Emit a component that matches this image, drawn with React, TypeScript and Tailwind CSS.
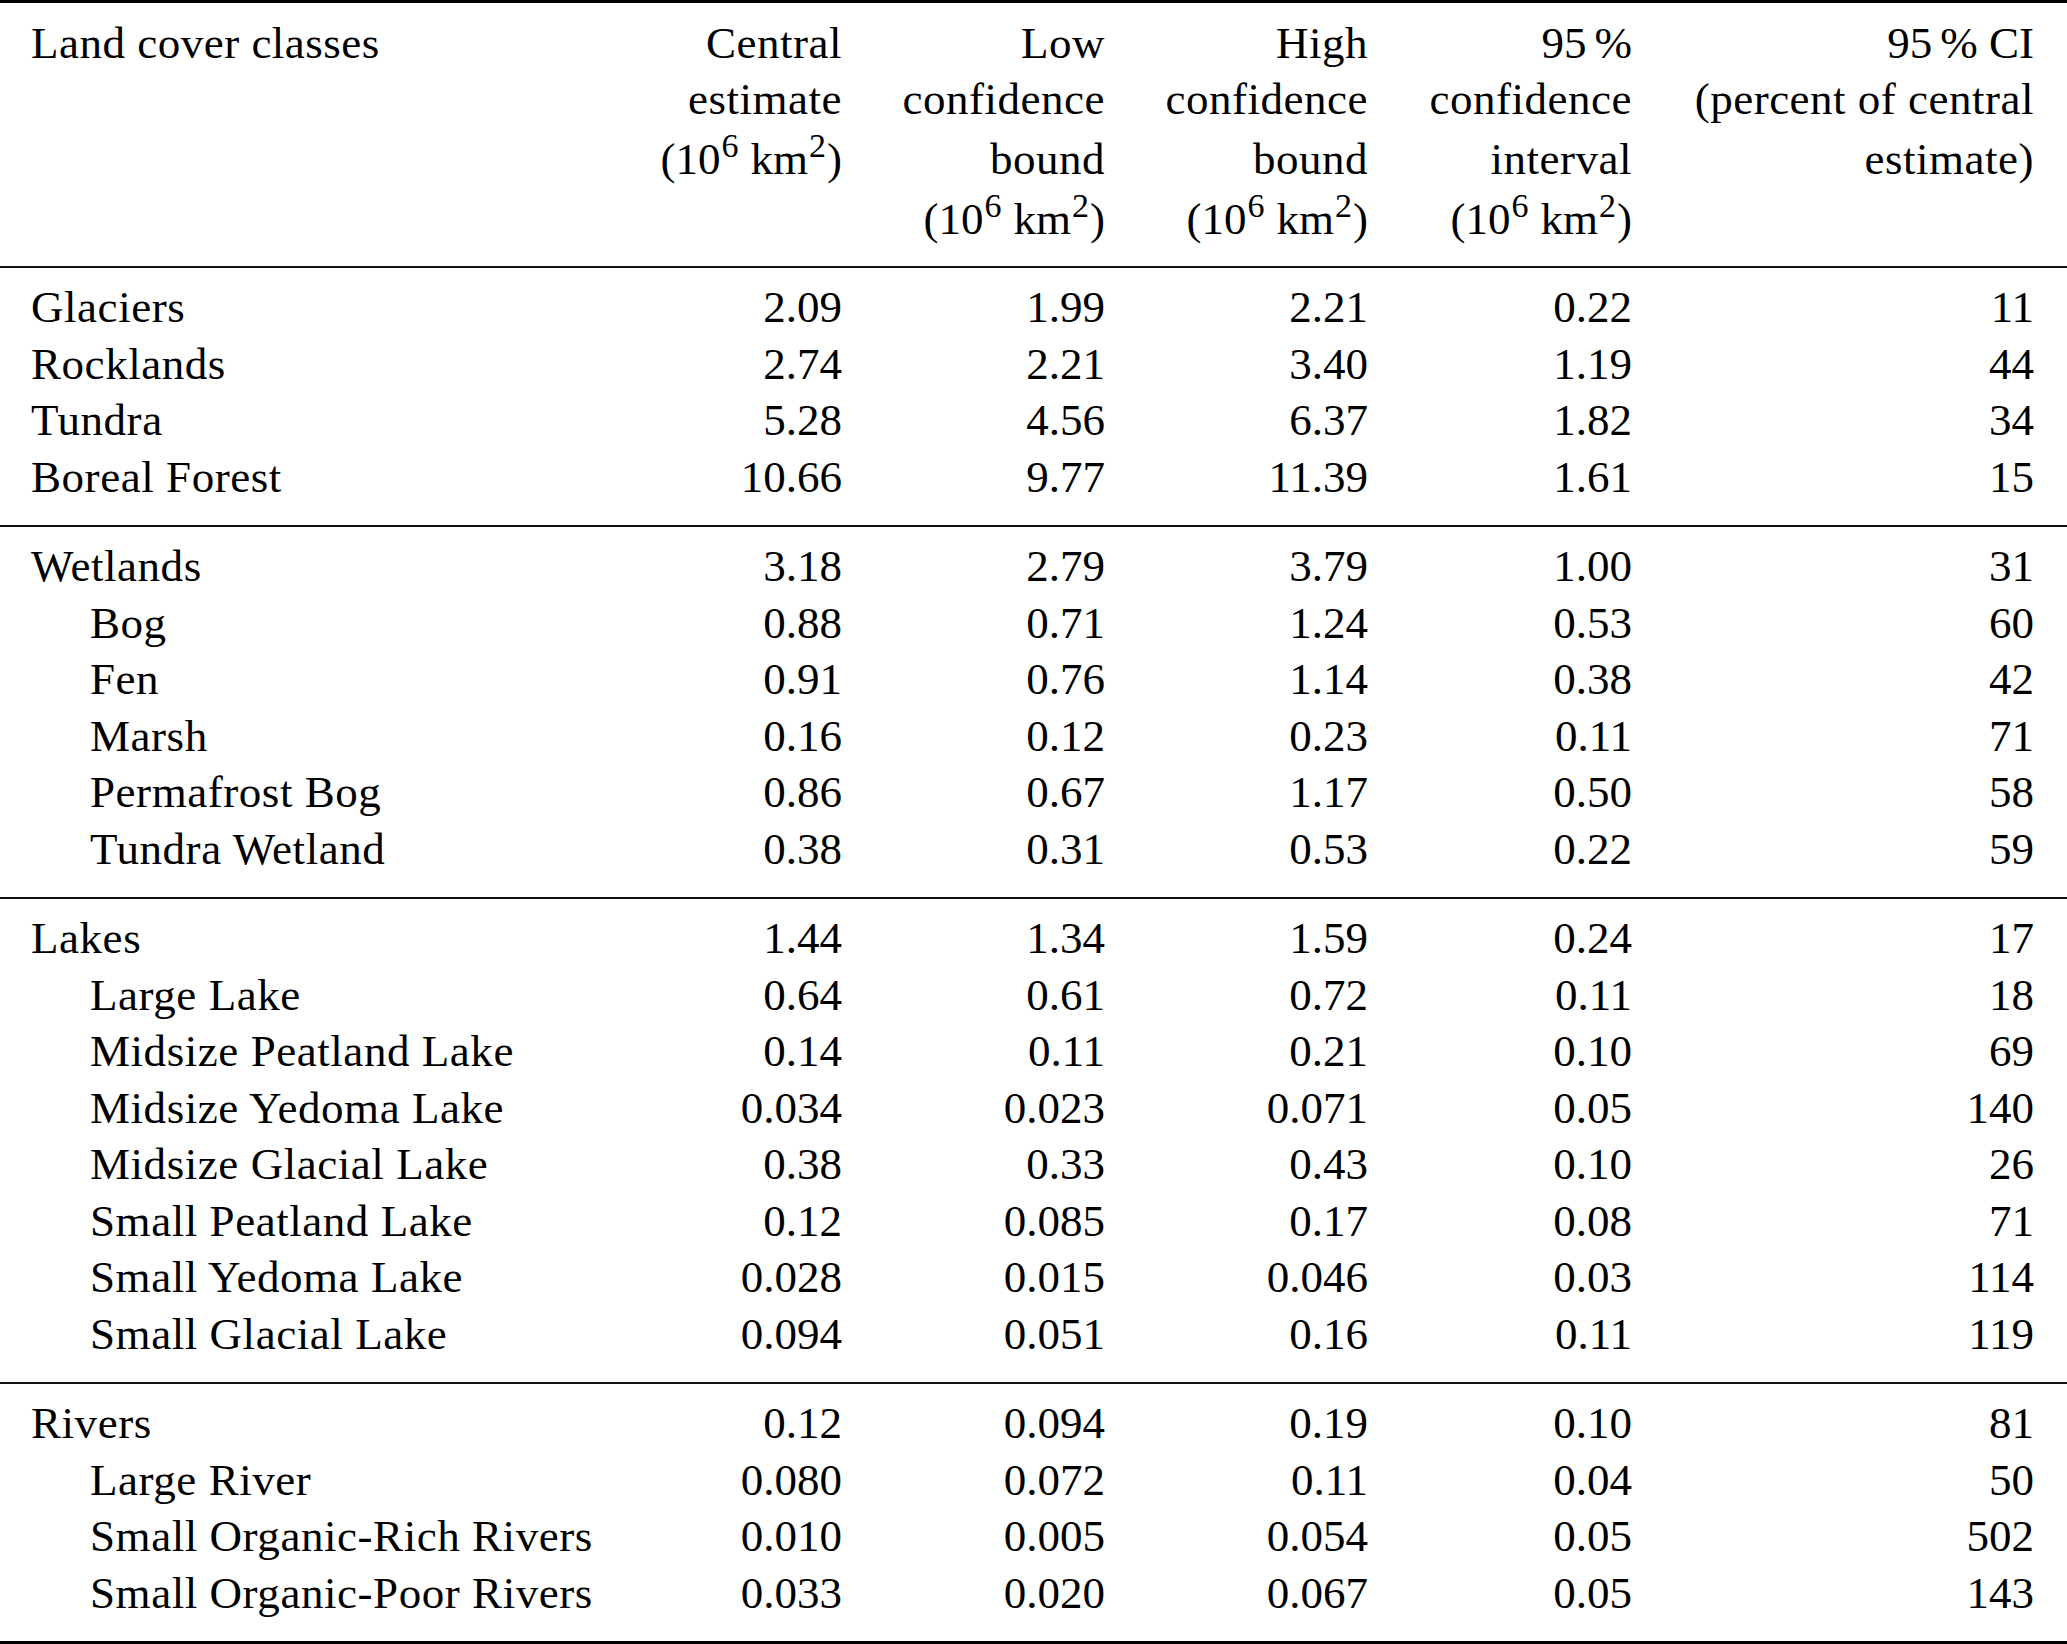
type Row = {
  name: string;
  sub?: boolean;
  values: string[];
};

type Section = Row[];

const sections: Section[] = [
  [
    { name: "Glaciers", values: ["2.09", "1.99", "2.21", "0.22", "11"] },
    { name: "Rocklands", values: ["2.74", "2.21", "3.40", "1.19", "44"] },
    { name: "Tundra", values: ["5.28", "4.56", "6.37", "1.82", "34"] },
    { name: "Boreal Forest", values: ["10.66", "9.77", "11.39", "1.61", "15"] },
  ],
  [
    { name: "Wetlands", values: ["3.18", "2.79", "3.79", "1.00", "31"] },
    { name: "Bog", sub: true, values: ["0.88", "0.71", "1.24", "0.53", "60"] },
    { name: "Fen", sub: true, values: ["0.91", "0.76", "1.14", "0.38", "42"] },
    { name: "Marsh", sub: true, values: ["0.16", "0.12", "0.23", "0.11", "71"] },
    { name: "Permafrost Bog", sub: true, values: ["0.86", "0.67", "1.17", "0.50", "58"] },
    { name: "Tundra Wetland", sub: true, values: ["0.38", "0.31", "0.53", "0.22", "59"] },
  ],
  [
    { name: "Lakes", values: ["1.44", "1.34", "1.59", "0.24", "17"] },
    { name: "Large Lake", sub: true, values: ["0.64", "0.61", "0.72", "0.11", "18"] },
    { name: "Midsize Peatland Lake", sub: true, values: ["0.14", "0.11", "0.21", "0.10", "69"] },
    { name: "Midsize Yedoma Lake", sub: true, values: ["0.034", "0.023", "0.071", "0.05", "140"] },
    { name: "Midsize Glacial Lake", sub: true, values: ["0.38", "0.33", "0.43", "0.10", "26"] },
    { name: "Small Peatland Lake", sub: true, values: ["0.12", "0.085", "0.17", "0.08", "71"] },
    { name: "Small Yedoma Lake", sub: true, values: ["0.028", "0.015", "0.046", "0.03", "114"] },
    { name: "Small Glacial Lake", sub: true, values: ["0.094", "0.051", "0.16", "0.11", "119"] },
  ],
  [
    { name: "Rivers", values: ["0.12", "0.094", "0.19", "0.10", "81"] },
    { name: "Large River", sub: true, values: ["0.080", "0.072", "0.11", "0.04", "50"] },
    { name: "Small Organic-Rich Rivers", sub: true, values: ["0.010", "0.005", "0.054", "0.05", "502"] },
    { name: "Small Organic-Poor Rivers", sub: true, values: ["0.033", "0.020", "0.067", "0.05", "143"] },
  ],
];

const grid =
  "grid grid-cols-[548px_263px_263px_263px_264px_402px] pl-[31px] pr-[33px]";

// (10^6 km^2)
const Unit = () => (
  <span className="tracking-normal">
    (10<sup className="text-[34px] ml-[1px]">6</sup>
    <span className="ml-[12px]">km</span>
    <sup className="text-[34px] ml-[1px]">2</sup>
    <span className="ml-[1px]">)</span>
  </span>
);

const Pct = ({ tail }: { tail?: string }) => (
  <span className="tracking-normal">
    95<span className="ml-[8px]">%</span>
    {tail}
  </span>
);

const headerLines: React.ReactNode[][] = [
  ["Land cover classes", "Central", "Low", "High", <Pct />, <Pct tail=" CI" />],
  ["", "estimate", "confidence", "confidence", "confidence", "(percent of central"],
  ["", <Unit />, "bound", "bound", "interval", "estimate)"],
  ["", "", <Unit />, <Unit />, <Unit />, ""],
];

const Rule = ({ thick }: { thick?: boolean }) => (
  <div className={thick ? "h-[3px] bg-black" : "h-[2px] bg-[#111]"} />
);

export default function App() {
  return (
    <div className="min-h-screen bg-white font-['Liberation_Serif',serif] text-[45px] text-black">
      <Rule thick />

      {/* Header */}
      <div className="pt-[12px] pb-[19px]">
        {headerLines.map((line, i) => (
          <div
            key={i}
            className={`${grid} leading-[56px] whitespace-nowrap tracking-[0.5px] ${
              i >= 2 ? "mt-[4px]" : ""
            }`}
          >
            {line.map((cell, j) => (
              <div key={j} className={j === 0 ? "text-left" : "text-right"}>
                {cell}
              </div>
            ))}
          </div>
        ))}
      </div>

      {sections.map((rows, s) => (
        <div key={s}>
          <Rule />
          <div className="pt-[11px] pb-[20px]">
            {rows.map((row) => (
              <div
                key={row.name}
                className={`${grid} leading-[56.5px] whitespace-nowrap`}
              >
                <div
                  className={`tracking-[0.55px] ${row.sub ? "pl-[59px]" : ""}`}
                >
                  {row.name}
                </div>
                {row.values.map((v, k) => (
                  <div key={k} className="text-right">
                    {v}
                  </div>
                ))}
              </div>
            ))}
          </div>
        </div>
      ))}

      <Rule thick />
    </div>
  );
}
